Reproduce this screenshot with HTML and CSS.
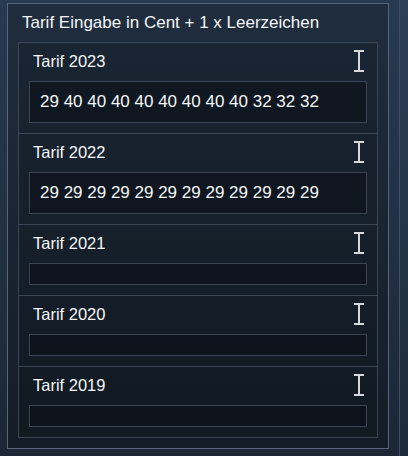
FILE: index.html
```html
<!DOCTYPE html>
<html lang="de">
<head>
  <meta charset="UTF-8" />
  <meta name="viewport" content="width=device-width, initial-scale=1.0"/>
  <title>Tarif Eingabe</title>
  <link rel="stylesheet" href="styles.css">
</head>
<body>
  <div class="page">
    <div class="panel">
      <div class="panel-title">Tarif Eingabe in Cent + 1 x Leerzeichen</div>
      <div class="list">
        <div class="tarif">
          <div class="tarif-head">
            <span>Tarif 2023</span>
            <svg class="ibeam" width="10" height="22" viewBox="0 0 10 22"><path d="M0 1h10M5 1v20M0 21h10" /></svg>
          </div>
          <div class="value">29 40 40 40 40 40 40 40 40 32 32 32</div>
        </div>
        <div class="tarif">
          <div class="tarif-head">
            <span>Tarif 2022</span>
            <svg class="ibeam" width="10" height="22" viewBox="0 0 10 22"><path d="M0 1h10M5 1v20M0 21h10" /></svg>
          </div>
          <div class="value">29 29 29 29 29 29 29 29 29 29 29 29</div>
        </div>
        <div class="tarif">
          <div class="tarif-head">
            <span>Tarif 2021</span>
            <svg class="ibeam" width="10" height="22" viewBox="0 0 10 22"><path d="M0 1h10M5 1v20M0 21h10" /></svg>
          </div>
          <div class="value"></div>
        </div>
        <div class="tarif">
          <div class="tarif-head">
            <span>Tarif 2020</span>
            <svg class="ibeam" width="10" height="22" viewBox="0 0 10 22"><path d="M0 1h10M5 1v20M0 21h10" /></svg>
          </div>
          <div class="value"></div>
        </div>
        <div class="tarif">
          <div class="tarif-head">
            <span>Tarif 2019</span>
            <svg class="ibeam" width="10" height="22" viewBox="0 0 10 22"><path d="M0 1h10M5 1v20M0 21h10" /></svg>
          </div>
          <div class="value"></div>
        </div>
      </div>
    </div>
    <div class="side"></div>
  </div>
</body>
</html>
```

FILE: styles.css
```css
:root {
  --color-texto: #f4f6f8;
  --borde-panel: #56657a;
  --borde: #3a4553;
}

body {
  font-family: 'Liberation Sans', Arial, sans-serif;
  margin: 0;
  padding: 0;
  background: linear-gradient(#283a50, #1b2737);
  color: var(--color-texto);
}

.page {
  display: flex;
  height: 456px;
  padding: 3px 0 0 7px;
  box-sizing: border-box;
}

.panel {
  width: 383px;
  height: 446px;
  box-sizing: border-box;
  border: 1px solid var(--borde-panel);
  background: linear-gradient(#1f2d3e, #141c27);
  padding: 9px 10px 10px 10px;
}

.panel-title {
  font-size: 17px;
  line-height: 20px;
  padding-left: 4px;
  margin-bottom: 9px;
}

.list {
  border: 1px solid var(--borde);
  background: linear-gradient(#1a2533, #111921);
}

.tarif {
  padding: 7px 10px 10px 10px;
  border-top: 1px solid var(--borde);
}

.tarif:first-child {
  border-top: none;
}

.tarif-head {
  display: flex;
  justify-content: space-between;
  align-items: center;
  height: 22px;
  line-height: 22px;
  font-size: 16.5px;
  padding: 0 3px 0 4px;
  margin-bottom: 9px;
}

.ibeam path {
  stroke: #d5d9de;
  stroke-width: 2;
  fill: none;
}

.value {
  border: 1px solid var(--borde);
  background: rgba(10, 15, 22, 0.55);
  font-size: 17px;
  line-height: 20px;
  padding: 10px;
  white-space: nowrap;
}

.value:empty {
  padding: 0;
  height: 20px;
}

.side {
  margin-left: 10px;
  margin-top: -3px;
  width: 8px;
  border-left: 1px solid #3d5068;
  background: linear-gradient(#2d3f56, #1d2a3a);
}
```
